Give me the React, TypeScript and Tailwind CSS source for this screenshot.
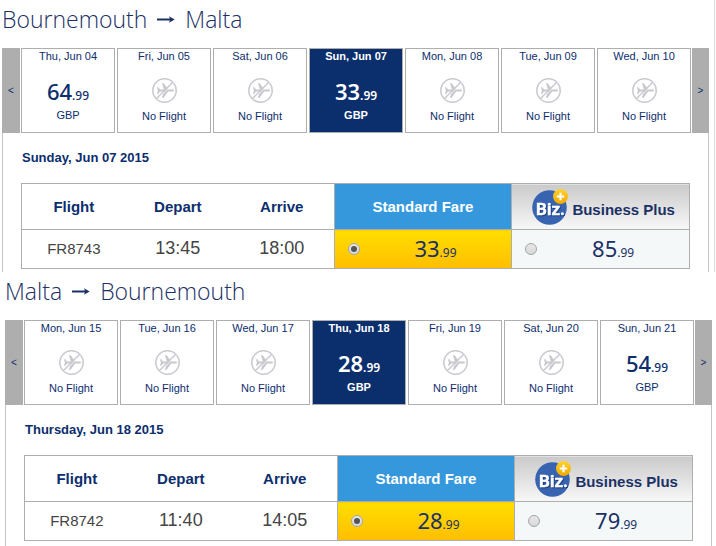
import { useState } from "react";

type Day = { label: string; price?: [string, string] };

type Leg = {
  id: string;
  from: string;
  to: string;
  days: Day[];
  selected: number;
  date: string;
  flight: string;
  depart: string;
  arrive: string;
  standard: [string, string];
  business: [string, string];
};

const outbound: Leg = {
  id: "outbound",
  from: "Bournemouth",
  to: "Malta",
  days: [
    { label: "Thu, Jun 04", price: ["64", "99"] },
    { label: "Fri, Jun 05" },
    { label: "Sat, Jun 06" },
    { label: "Sun, Jun 07", price: ["33", "99"] },
    { label: "Mon, Jun 08" },
    { label: "Tue, Jun 09" },
    { label: "Wed, Jun 10" },
  ],
  selected: 3,
  date: "Sunday, Jun 07 2015",
  flight: "FR8743",
  depart: "13:45",
  arrive: "18:00",
  standard: ["33", "99"],
  business: ["85", "99"],
};

const inbound: Leg = {
  id: "inbound",
  from: "Malta",
  to: "Bournemouth",
  days: [
    { label: "Mon, Jun 15" },
    { label: "Tue, Jun 16" },
    { label: "Wed, Jun 17" },
    { label: "Thu, Jun 18", price: ["28", "99"] },
    { label: "Fri, Jun 19" },
    { label: "Sat, Jun 20" },
    { label: "Sun, Jun 21", price: ["54", "99"] },
  ],
  selected: 3,
  date: "Thursday, Jun 18 2015",
  flight: "FR8742",
  depart: "11:40",
  arrive: "14:05",
  standard: ["28", "99"],
  business: ["79", "99"],
};

function Price({ value }: { value: [string, string] }) {
  return (
    <span className="font-['Noto_Sans',sans-serif] text-[22px] leading-6">
      {value[0]}
      <span className="text-xs">.{value[1]}</span>
    </span>
  );
}

function NoFlightIcon() {
  return (
    <svg className="size-[25px]" viewBox="0 0 25 25" fill="none" aria-hidden="true">
      <circle cx="12.5" cy="12.5" r="11.7" stroke="#c8c9cf" strokeWidth="1.5" />
      <path
        d="M5 9.300h1.400l1.600 2.200h4L9.800 5.200h1.900l4.500 6.300h3.800c1.400 0 2.200.4 2.200 1s-.8 1-2.200 1h-3.800l-4.500 6.300H9.800l2.200-6.300H8l-1.600 2.200H5l.9-3.200z"
        fill="#c8c9cf"
      />
      <path d="M5.300 21.300 21.300 5.300" stroke="#fff" strokeWidth="0.8" />
      <path d="M4.500 20.500 20.500 4.500" stroke="#c8c9cf" strokeWidth="1.5" />
    </svg>
  );
}

function BizLogo() {
  return (
    <svg className="h-9 w-9 shrink-0" viewBox="0 0 36 36" aria-hidden="true">
      <defs>
        <linearGradient id="coin" x1="0" y1="0" x2="0" y2="1">
          <stop offset="0" stopColor="#ffd22e" />
          <stop offset="1" stopColor="#f0a800" />
        </linearGradient>
      </defs>
      <circle cx="17.5" cy="18.5" r="17.3" fill="#3863b0" />
      <text
        x="18.5"
        y="26"
        textAnchor="middle"
        fill="#fff"
        stroke="#fff"
        strokeWidth="0.4"
        className="font-['Roboto',sans-serif] text-[17px] font-bold drop-shadow-[1px_1px_0_#1d3f80]"
      >
        Biz.
      </text>
      <circle cx="28.5" cy="7.5" r="7.5" fill="url(#coin)" />
      <path d="M28.5 3.8v7.4M24.8 7.5h7.4" stroke="#fff" strokeWidth="2.2" />
    </svg>
  );
}

function RouteArrow() {
  return (
    <svg className="mx-[10px] h-[9px] w-[18px]" viewBox="0 0 18 9" role="img" aria-label="to">
      <path d="M0 4.5h14" stroke="#1b3166" strokeWidth="2" />
      <path d="M12 1.2 17.7 4.5 12 7.8l1.2-3.3z" fill="#1b3166" />
    </svg>
  );
}

function FareOption({
  name,
  label,
  value,
  checked,
  onSelect,
}: {
  name: string;
  label: string;
  value: [string, string];
  checked: boolean;
  onSelect: () => void;
}) {
  return (
    <label className="flex items-center pl-[13px]">
      <input
        type="radio"
        name={name}
        aria-label={label}
        checked={checked}
        onChange={onSelect}
        className="grid size-3 shrink-0 appearance-none place-content-center rounded-full border border-[#a5a5a5] bg-linear-to-b from-[#e8e8e8] to-[#d8d8d8] before:size-[6px] before:rounded-full checked:before:bg-[#555]"
      />
      <span className="flex-1 pt-px text-center text-[#1b3166]">
        <Price value={value} />
      </span>
    </label>
  );
}

const stepClass =
  "flex shrink-0 items-center justify-center bg-[#aeaeae] text-[10px] text-[#0b2e6d]";

function FlightLeg({ leg }: { leg: Leg }) {
  const [selected, setSelected] = useState(leg.selected);
  const [fare, setFare] = useState("standard");

  return (
    <section className="flex grow flex-col">
      <h2 className="flex h-12 items-center pb-[10px] font-['Open_Sans',sans-serif] text-[23px] font-light text-[#1b3166]">
        {leg.from}
        <RouteArrow />
        {leg.to}
      </h2>

      <div className="flex h-[85px] gap-px">
        <button type="button" aria-label="Previous days" className={`${stepClass} w-[18px]`}>
          &lt;
        </button>
        <div className="flex flex-1 gap-[2px]">
          {leg.days.map((day, i) => (
            <button
              key={day.label}
              type="button"
              aria-pressed={i === selected}
              onClick={() => setSelected(i)}
              className={`flex flex-1 flex-col items-center border border-[#aeaeae] text-[11px] leading-[14px] ${
                i === selected ? "bg-[#0b2e6d] font-bold text-white" : "bg-white text-[#0b2e6d]"
              }`}
            >
              <span>{day.label}</span>
              {day.price ? (
                <>
                  <span className={`mt-4 ${i === selected ? "font-semibold" : "font-medium"}`}>
                    <Price value={day.price} />
                  </span>
                  <span className="mt-1">GBP</span>
                </>
              ) : (
                <>
                  <span className="mt-[15px]">
                    <NoFlightIcon />
                  </span>
                  <span className="mt-[6px]">No Flight</span>
                </>
              )}
            </button>
          ))}
        </div>
        <button type="button" aria-label="Next days" className={`${stepClass} w-[17px]`}>
          &gt;
        </button>
      </div>

      <div className="grow border-x border-[#c4c4c4] px-[18px] pt-[17px] pb-[3px]">
        <h3 className="pl-px text-[13px] leading-4 font-bold text-[#0b2e6d]">{leg.date}</h3>
        <table className="mt-[17px] w-full table-fixed border-collapse border border-[#aeaeae] text-[15px] text-[#0b2e6d]">
          <colgroup>
            <col className="w-[15.6%]" />
            <col className="w-[15.6%]" />
            <col className="w-[15.6%]" />
            <col className="w-[26.6%]" />
            <col className="w-[26.6%]" />
          </colgroup>
          <thead>
            <tr className="h-[46px] border-b border-[#aeaeae]">
              <th scope="col" className="pt-[2px]">Flight</th>
              <th scope="col" className="pt-[2px]">Depart</th>
              <th scope="col" className="pt-[2px]">Arrive</th>
              <th scope="col" className="border-l border-[#aeaeae] bg-[#3598dc] pt-[2px] text-white">
                Standard Fare
              </th>
              <th
                scope="col"
                className="border-l border-[#aeaeae] bg-linear-to-b from-[#cacaca] to-[#f8f8f8] text-[#1b3166]"
              >
                <span className="flex items-center justify-center gap-1 pl-[6px]">
                  <BizLogo />
                  <span className="pt-2">Business Plus</span>
                </span>
              </th>
            </tr>
          </thead>
          <tbody>
            <tr className="h-[39px] text-center text-[#444]">
              <td>{leg.flight}</td>
              <td className="pb-[2px] text-lg leading-6">{leg.depart}</td>
              <td className="pb-[2px] text-lg leading-6">{leg.arrive}</td>
              <td className="border-l border-[#aeaeae] bg-linear-to-b from-[#ffde00] to-[#ffbe00]">
                <FareOption
                  name={leg.id}
                  label="Standard Fare"
                  value={leg.standard}
                  checked={fare === "standard"}
                  onSelect={() => setFare("standard")}
                />
              </td>
              <td className="border-l border-[#aeaeae] bg-[#f4f8f9]">
                <FareOption
                  name={leg.id}
                  label="Business Plus"
                  value={leg.business}
                  checked={fare === "business"}
                  onSelect={() => setFare("business")}
                />
              </td>
            </tr>
          </tbody>
        </table>
      </div>
    </section>
  );
}

export default function App() {
  return (
    <main className="flex min-h-screen flex-col bg-white font-['Liberation_Sans',Arial,sans-serif]">
      <div className="mr-px flex border-r border-[#dcdcdc] pr-[5px] pl-[2px]">
        <FlightLeg leg={outbound} />
      </div>
      <div className="flex grow pr-1 pl-[5px]">
        <FlightLeg leg={inbound} />
      </div>
    </main>
  );
}
